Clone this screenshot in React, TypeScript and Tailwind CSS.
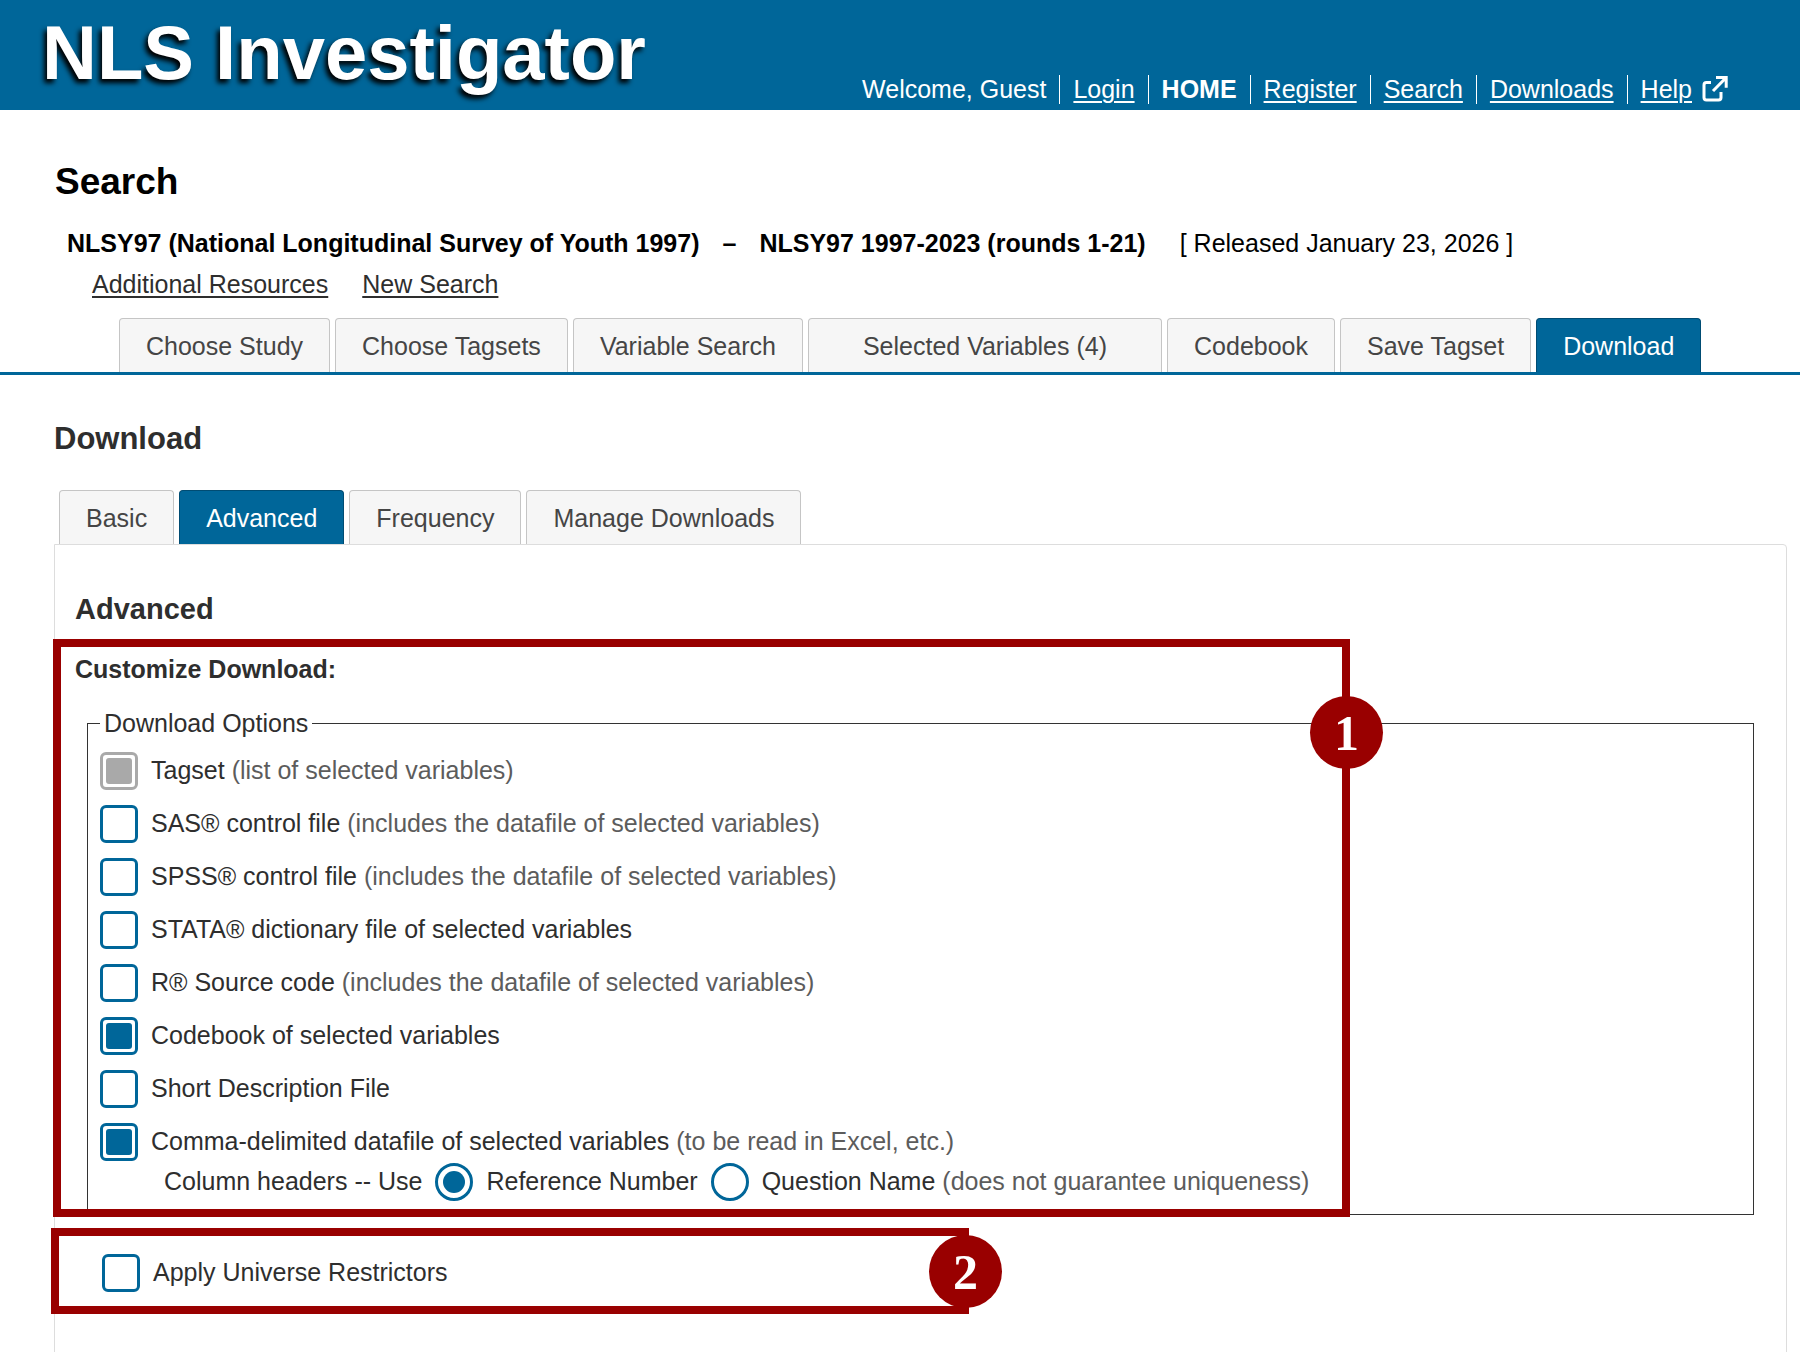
import { useState } from "react";

type TTab = { label: string; wide?: boolean };

type TOption = {
  id: string;
  label: string;
  hint?: string;
  disabled?: boolean;
};

const navLinks = ["Login", "HOME", "Register", "Search", "Downloads"];

const mainTabs: TTab[] = [
  { label: "Choose Study" },
  { label: "Choose Tagsets" },
  { label: "Variable Search" },
  { label: "Selected Variables (4)", wide: true },
  { label: "Codebook" },
  { label: "Save Tagset" },
  { label: "Download" },
];

const downloadTabs: TTab[] = [
  { label: "Basic" },
  { label: "Advanced" },
  { label: "Frequency" },
  { label: "Manage Downloads" },
];

const options: TOption[] = [
  {
    id: "tagset",
    label: "Tagset",
    hint: "(list of selected variables)",
    disabled: true,
  },
  {
    id: "sas",
    label: "SAS® control file",
    hint: "(includes the datafile of selected variables)",
  },
  {
    id: "spss",
    label: "SPSS® control file",
    hint: "(includes the datafile of selected variables)",
  },
  { id: "stata", label: "STATA® dictionary file of selected variables" },
  {
    id: "r",
    label: "R® Source code",
    hint: "(includes the datafile of selected variables)",
  },
  { id: "codebook", label: "Codebook of selected variables" },
  { id: "short", label: "Short Description File" },
  {
    id: "csv",
    label: "Comma-delimited datafile of selected variables",
    hint: "(to be read in Excel, etc.)",
  },
];

const boxClass =
  "grid size-[38px] shrink-0 appearance-none place-items-center border-3 border-[#006699] bg-white disabled:border-[#a9a9a9] checked:before:bg-[#006699] disabled:checked:before:bg-[#a9a9a9]";
const checkboxClass = `${boxClass} rounded-[6px] before:size-[26px] before:rounded-[3px] before:content-['']`;
const radioClass = `${boxClass} rounded-full before:size-[22px] before:rounded-full before:content-['']`;

const Tabs = ({
  tabs,
  active,
  onSelect,
}: {
  tabs: TTab[];
  active: string;
  onSelect: (label: string) => void;
}) => (
  <>
    {tabs.map((tab) => (
      <button
        key={tab.label}
        type="button"
        onClick={() => onSelect(tab.label)}
        className={`h-[54px] rounded-t-[4px] border border-b-0 whitespace-nowrap ${
          tab.wide ? "px-[54px]" : "px-[26px]"
        } ${
          tab.label === active
            ? "border-[#004c73] bg-[#006699] text-white"
            : "border-[#c5c5c5] bg-[#f6f6f6] text-[#454545]"
        }`}
      >
        {tab.label}
      </button>
    ))}
  </>
);

const Badge = ({ children }: { children: React.ReactNode }) => (
  <span className="flex size-[73px] items-center justify-center rounded-full bg-[#990000] font-['Liberation_Serif',serif] text-[50px] font-bold text-white">
    {children}
  </span>
);

const Checkbox = ({
  option,
  checked,
  onChange,
}: {
  option: TOption;
  checked: boolean;
  onChange: () => void;
}) => (
  <div className="flex items-center gap-[13px]">
    <input
      id={option.id}
      type="checkbox"
      checked={checked}
      disabled={option.disabled}
      onChange={onChange}
      className={checkboxClass}
    />
    <label htmlFor={option.id} className="pb-[2px]">
      {option.label}{" "}
      {option.hint && <span className="text-[#5c5c5c]">{option.hint}</span>}
    </label>
  </div>
);

const App = () => {
  const [mainTab, setMainTab] = useState("Download");
  const [downloadTab, setDownloadTab] = useState("Advanced");
  const [checked, setChecked] = useState(["tagset", "codebook", "csv"]);
  const [header, setHeader] = useState("reference");

  const toggle = (id: string) => {
    setChecked(
      checked.includes(id) ? checked.filter((c) => c !== id) : [...checked, id]
    );
  };

  return (
    <div className="min-h-screen overflow-hidden bg-white font-['Liberation_Sans',Arial,sans-serif] text-[25px] leading-[30px] text-[#2e2e2e]">
      <header className="flex h-[110px] items-start justify-between bg-[#006699] pr-[72px] pl-[42px] text-white">
        <div className="pt-[10px] text-[76px] leading-[86px] font-bold whitespace-nowrap [text-shadow:-3px_4px_5px_#000]">
          NLS Investigator
        </div>
        <nav className="flex pt-[75px] leading-[28px] whitespace-nowrap">
          <span className="pr-[13px]">Welcome, Guest</span>
          {navLinks.map((link) => (
            <a
              key={link}
              href="#"
              className={`h-[29px] border-l border-white px-[13px] ${
                link === "HOME"
                  ? "font-bold"
                  : "underline decoration-2 underline-offset-3"
              }`}
            >
              {link}
            </a>
          ))}
          <a
            href="#"
            className="flex h-[29px] gap-[10px] border-l border-white pl-[13px]"
          >
            <span className="underline decoration-2 underline-offset-3">
              Help
            </span>
            <svg
              className="h-[27px] w-[26px]"
              viewBox="0 0 26 27"
              fill="none"
              stroke="currentColor"
              strokeWidth="3"
              aria-hidden="true"
            >
              <path d="M9 7.5H4.5a2.5 2.5 0 0 0-2.5 2.5v12.5a2.5 2.5 0 0 0 2.5 2.5h12a2.5 2.5 0 0 0 2.5-2.5v-5.5M14 2.5h10.2v10.2M24 2.7L11 16" />
            </svg>
          </a>
        </nav>
      </header>

      <h1 className="pt-[51px] pl-[55px] text-[37px] leading-[42px] font-bold text-black">
        Search
      </h1>
      <div className="flex pt-[25px] pl-[67px] whitespace-pre text-black">
        <strong>NLSY97 (National Longitudinal Survey of Youth 1997)</strong>
        <strong className="px-[23px]">–</strong>
        <strong>NLSY97 1997-2023 (rounds 1-21)</strong>
        <span className="pl-[34px]">[ Released January 23, 2026 ]</span>
      </div>
      <div className="flex gap-[34px] pt-[11px] pl-[92px]">
        <a href="#" className="underline decoration-2 underline-offset-3">
          Additional Resources
        </a>
        <a href="#" className="underline decoration-2 underline-offset-3">
          New Search
        </a>
      </div>

      <div className="mt-[19px] flex gap-[5px] border-b-3 border-[#006699] pl-[119px]">
        <Tabs tabs={mainTabs} active={mainTab} onSelect={setMainTab} />
      </div>

      <main className="pr-[13px] pl-[54px]">
        <h2 className="pt-[46px] text-[31px] leading-[36px] font-bold">
          Download
        </h2>
        <div className="flex gap-[5px] pt-[33px] pl-[5px]">
          <Tabs
            tabs={downloadTabs}
            active={downloadTab}
            onSelect={setDownloadTab}
          />
        </div>
        <section className="h-[820px] rounded-tr-[4px] border border-[#dddddd] pr-[32px]">
          <h3 className="pt-[47px] pl-[20px] text-[29px] leading-[34px] font-bold">
            {downloadTab}
          </h3>
          <div className="relative mt-[13px] pb-[13px]">
            <h4 className="pt-[15px] pl-[20px] font-bold">
              Customize Download:
            </h4>
            <fieldset className="mt-[24px] ml-[32px] border border-[#333333] pr-3 pb-[13px] pl-[12px]">
              <legend className="px-[4px]">Download Options</legend>
              <div className="flex flex-col gap-[15px] pt-[14px]">
                {options.map((option) => (
                  <Checkbox
                    key={option.id}
                    option={option}
                    checked={checked.includes(option.id)}
                    onChange={() => toggle(option.id)}
                  />
                ))}
              </div>
              <div className="mt-[2px] flex items-center gap-[13px] pl-[64px]">
                <span className="pb-[2px]">Column headers -- Use</span>
                <input
                  id="reference"
                  type="radio"
                  name="header"
                  checked={header === "reference"}
                  onChange={() => setHeader("reference")}
                  className={radioClass}
                />
                <label htmlFor="reference" className="pb-[2px]">
                  Reference Number
                </label>
                <input
                  id="question"
                  type="radio"
                  name="header"
                  checked={header === "question"}
                  onChange={() => setHeader("question")}
                  className={radioClass}
                />
                <label htmlFor="question" className="pb-[2px]">
                  Question Name{" "}
                  <span className="text-[#5c5c5c]">
                    (does not guarantee uniqueness)
                  </span>
                </label>
              </div>
            </fieldset>
            <div className="pointer-events-none absolute top-0 -left-[2px] h-[578px] w-[1297px] border-8 border-[#990000]">
              <div className="absolute top-[49px] -right-[41px]">
                <Badge>1</Badge>
              </div>
            </div>
          </div>
          <div className="relative pt-[26px] pl-[47px]">
            <Checkbox
              option={{ id: "universe", label: "Apply Universe Restrictors" }}
              checked={checked.includes("universe")}
              onChange={() => toggle("universe")}
            />
            <div className="pointer-events-none absolute top-0 -left-[4px] h-[86px] w-[918px] border-8 border-[#990000]">
              <div className="absolute -top-px -right-[41px]">
                <Badge>2</Badge>
              </div>
            </div>
          </div>
        </section>
      </main>
    </div>
  );
};

export default App;
